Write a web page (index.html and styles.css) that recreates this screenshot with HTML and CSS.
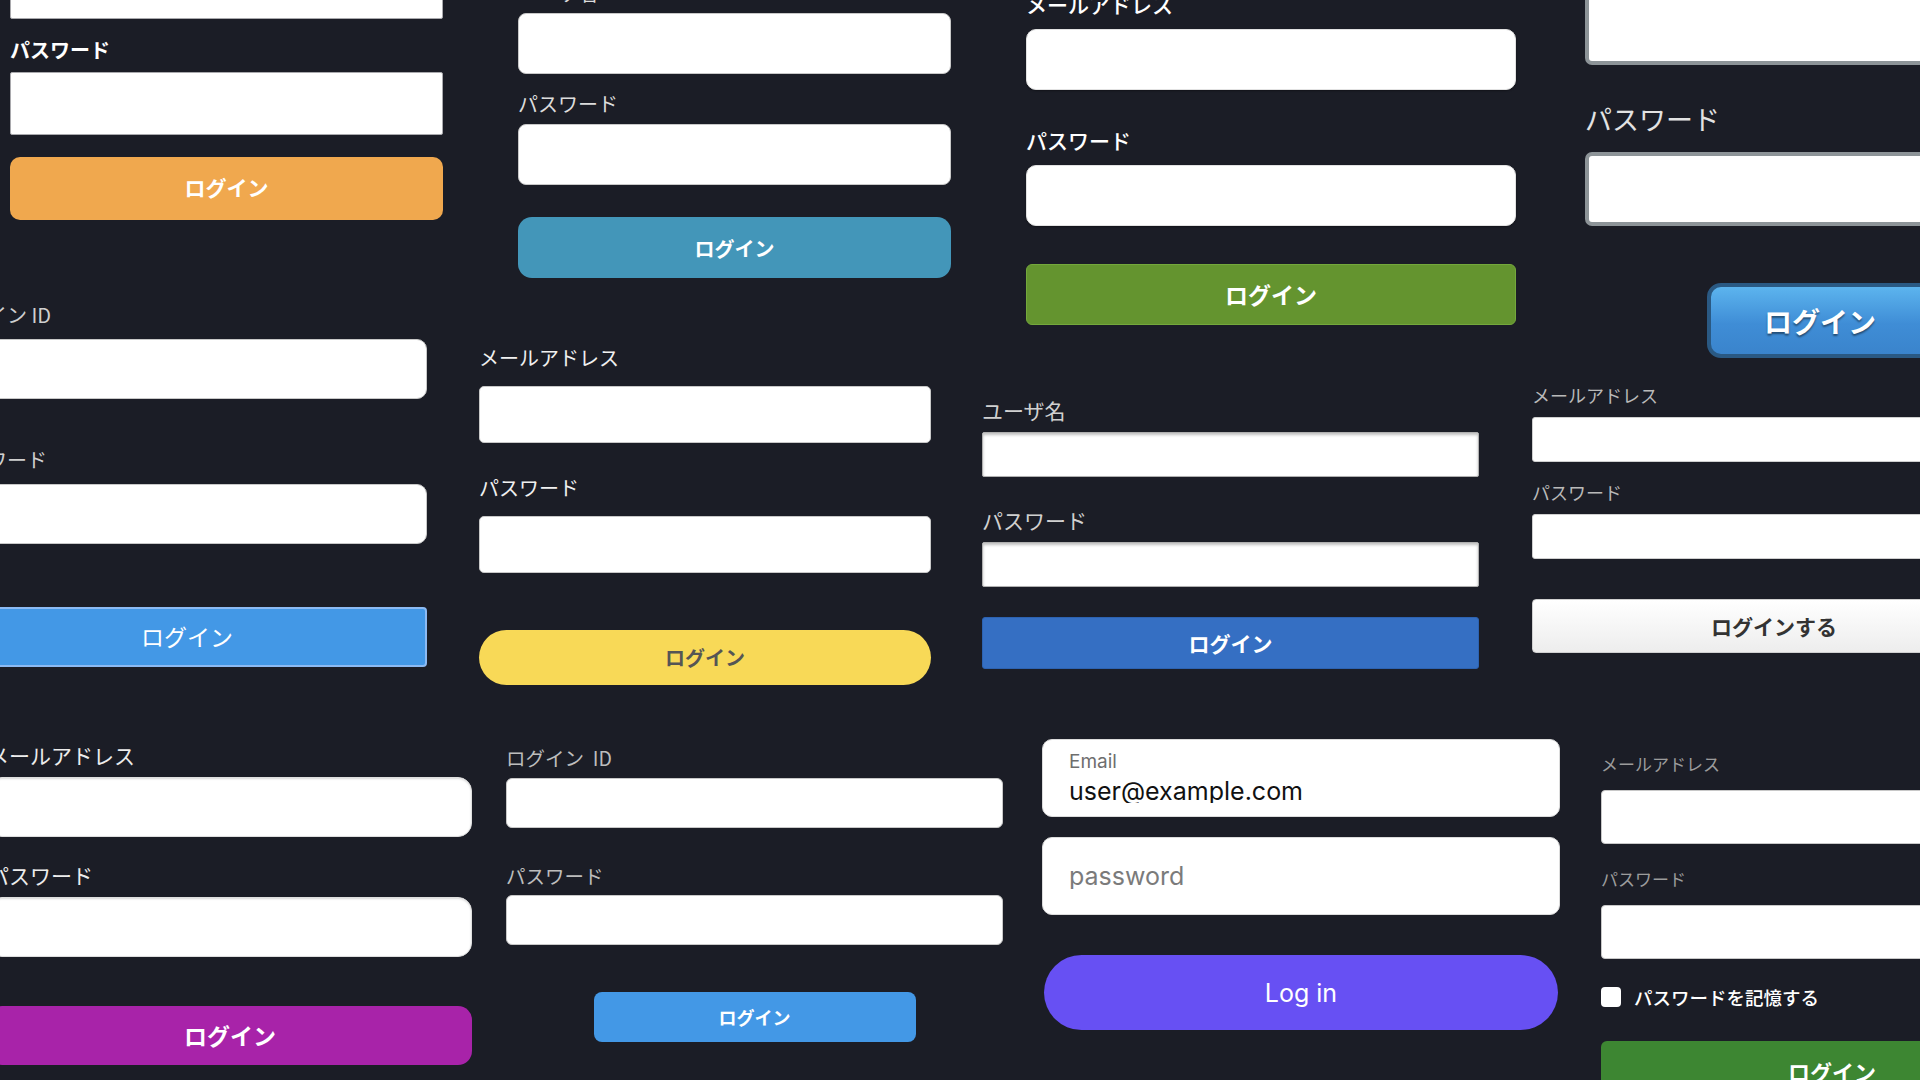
FILE: index.html
```html
<!DOCTYPE html>
<html lang="ja">
<head>
<meta charset="utf-8">
<title>ログインフォーム</title>
<link rel="stylesheet" href="styles.css">
</head>
<body>
<div class="canvas">

  <form class="form fa">
    <label class="lbl">メールアドレス</label>
    <input class="inp" type="text">
    <label class="lbl">パスワード</label>
    <input class="inp" type="password">
    <button class="btn" type="button">ログイン</button>
  </form>

  <form class="form fb">
    <label class="lbl">ユーザ名</label>
    <input class="inp" type="text">
    <label class="lbl">パスワード</label>
    <input class="inp" type="password">
    <button class="btn" type="button">ログイン</button>
  </form>

  <form class="form fc">
    <label class="lbl">メールアドレス</label>
    <input class="inp" type="text">
    <label class="lbl">パスワード</label>
    <input class="inp" type="password">
    <button class="btn" type="button">ログイン</button>
  </form>

  <form class="form fd">
    <label class="lbl">ユーザ名</label>
    <input class="inp" type="text">
    <label class="lbl">パスワード</label>
    <input class="inp" type="password">
    <button class="btn" type="button">ログイン</button>
  </form>

  <form class="form fe">
    <label class="lbl">ログイン ID</label>
    <input class="inp" type="text">
    <label class="lbl">パスワード</label>
    <input class="inp" type="password">
    <button class="btn" type="button">ログイン</button>
  </form>

  <form class="form ff">
    <label class="lbl">メールアドレス</label>
    <input class="inp" type="text">
    <label class="lbl">パスワード</label>
    <input class="inp" type="password">
    <button class="btn" type="button">ログイン</button>
  </form>

  <form class="form fg">
    <label class="lbl">ユーザ名</label>
    <input class="inp" type="text">
    <label class="lbl">パスワード</label>
    <input class="inp" type="password">
    <button class="btn" type="button">ログイン</button>
  </form>

  <form class="form fh">
    <label class="lbl">メールアドレス</label>
    <input class="inp" type="text">
    <label class="lbl">パスワード</label>
    <input class="inp" type="password">
    <button class="btn" type="button">ログインする</button>
  </form>

  <form class="form fi">
    <label class="lbl">メールアドレス</label>
    <input class="inp" type="text">
    <label class="lbl">パスワード</label>
    <input class="inp" type="password">
    <button class="btn" type="button">ログイン</button>
  </form>

  <form class="form fj">
    <label class="lbl">ログイン&nbsp;&nbsp;ID</label>
    <input class="inp" type="text">
    <label class="lbl">パスワード</label>
    <input class="inp" type="password">
    <button class="btn" type="button">ログイン</button>
  </form>

  <form class="form fk">
    <div class="field">
      <span class="flabel">Email</span>
      <input class="fval" type="text" value="user@example.com">
    </div>
    <div class="field pw">
      <input class="fval" type="password" placeholder="password">
    </div>
    <button class="btn" type="button">Log in</button>
  </form>

  <form class="form fl">
    <label class="lbl">メールアドレス</label>
    <input class="inp" type="text">
    <label class="lbl">パスワード</label>
    <input class="inp" type="password">
    <label class="remember"><input class="cb" type="checkbox"><span>パスワードを記憶する</span></label>
    <button class="btn" type="button">ログイン</button>
  </form>

</div>
</body>
</html>
```

FILE: styles.css
```css
html, body {
  margin: 0;
  padding: 0;
  background: #1b1d26;
  overflow: hidden;
}

.canvas {
  position: relative;
  width: 1920px;
  height: 1080px;
  overflow: hidden;
  background: #1b1d26;
  font-family: "Noto Sans CJK JP", "Noto Sans", sans-serif;
}

/* generic form */
.form {
  position: absolute;
  display: flex;
  flex-direction: column;
  margin: 0;
  box-sizing: border-box;
}

.form .lbl {
  display: block;
  font-size: var(--lfs);
  line-height: 1;
  color: var(--lc, #ddd);
  font-weight: var(--lw, 400);
  letter-spacing: var(--ls, 0);
  margin: 0 0 var(--gap) 0;
  white-space: nowrap;
}

.form .inp + .lbl {
  margin-top: var(--sep);
}

.form .inp {
  display: block;
  box-sizing: border-box;
  width: 100%;
  height: var(--ih);
  margin: 0;
  padding: 0 12px;
  background: #fff;
  border: 1px solid #c8c8c8;
  border-radius: var(--ir, 4px);
  font: inherit;
  outline: none;
}

.form .btn {
  display: flex;
  align-items: center;
  justify-content: center;
  box-sizing: border-box;
  width: 100%;
  margin: var(--bm) 0 0 0;
  padding: 0;
  border: none;
  font-family: inherit;
  color: #fff;
  font-weight: 700;
  cursor: pointer;
}

/* A : orange */
.fa {
  left: 10px; top: -76px; width: 433px;
  --lfs: 20px; --gap: 12px; --sep: 21px; --ih: 63px; --bm: 22px;
  --lc: #fff; --lw: 700; --ir: 2px;
}
.fa .inp { border-color: #a9a9ad; }
.fa .btn { height: 63px; border-radius: 10px; background: #f0a84e; font-size: 21px; padding-bottom: 3px; }

/* B : teal */
.fb {
  left: 518px; top: -17px; width: 433px;
  --lfs: 20px; --gap: 10px; --sep: 20px; --ih: 61px; --bm: 32px;
  --lc: #dcdcdc; --ir: 8px;
}
.fb .btn { height: 61px; border-radius: 14px; background: #4396b9; font-size: 20px; padding-top: 1px; }

/* C : green */
.fc {
  left: 1026px; top: -6px; width: 490px;
  --lfs: 21px; --gap: 14px; --sep: 40px; --ih: 61px; --bm: 38px;
  --lc: #fff; --lw: 500; --ir: 10px;
}
.fc .inp { border-color: #e2e2e2; box-shadow: 0 1px 2px rgba(0,0,0,0.35); }
.fc .btn { height: 61px; border-radius: 6px; background: #64942f; border: 1px solid #74a83c; font-size: 23px; padding-bottom: 2px; }

/* D : glossy blue */
.fd {
  left: 1585px; top: -56px; width: 470px;
  --lfs: 27px; --gap: 20px; --sep: 40px; --ih: 74px; --bm: 57px;
  --lc: #e2e2e2; --ir: 7px;
}
.fd .inp { border: 4px solid #8d9498; }
.fd .btn {
  align-self: center;
  width: 226px; height: 75px;
  border: 4px solid #2a5983;
  border-radius: 14px;
  background: linear-gradient(#5cb4ee, #3f8dd6 55%, #3a84cc);
  font-size: 28px;
  text-shadow: 0 2px 2px rgba(0,0,0,0.45);
}

/* E : light blue */
.fe {
  left: -53px; top: 305px; width: 480px;
  --lfs: 20px; --gap: 14px; --sep: 51px; --ih: 60px; --bm: 63px;
  --lc: #cfcfcf; --ir: 10px;
}
.fe .btn {
  height: 60px; border-radius: 4px; background: #4398e6;
  border: 2px solid #8cbaf3; font-size: 23px; font-weight: 400; padding-bottom: 2px;
}

/* F : yellow pill */
.ff {
  left: 479px; top: 348px; width: 452px;
  --lfs: 20px; --gap: 18px; --sep: 35px; --ih: 57px; --bm: 57px;
  --lc: #f0f0f0; --ir: 5px;
}
.ff .btn { height: 55px; border-radius: 28px; background: #f8d957; color: #555; font-size: 20px; }

/* G : classic blue */
.fg {
  left: 982px; top: 400px; width: 497px;
  --lfs: 21px; --gap: 11px; --sep: 33px; --ih: 45px; --bm: 30px;
  --lc: #d0d0d0; --ir: 2px;
}
.fg .inp { border-color: #b0b0b0; box-shadow: inset 0 2px 3px rgba(0,0,0,0.25); }
.fg .btn { height: 52px; border-radius: 3px; background: #356fc3; border: 1px solid #2d62b0; font-size: 21px; }

/* H : white button */
.fh {
  left: 1532px; top: 386px; width: 484px;
  --lfs: 18px; --gap: 13px; --sep: 21px; --ih: 45px; --bm: 40px;
  --lc: #b9b9b9; --ir: 3px;
}
.fh .inp { border-color: #cfcfcf; }
.fh .btn {
  height: 54px; border-radius: 4px;
  background: linear-gradient(#ffffff, #ededed);
  border: 1px solid #d0d0d0;
  color: #333; font-size: 21px;
}

/* I : purple */
.fi {
  left: -12px; top: 745px; width: 484px;
  --lfs: 21px; --gap: 11px; --sep: 28px; --ih: 60px; --bm: 49px;
  --lc: #ececec; --ir: 14px;
}
.fi .inp { border-color: #dedede; box-shadow: inset 0 1px 2px rgba(0,0,0,0.15); }
.fi .btn { height: 59px; border-radius: 14px; background: #a823a9; font-size: 23px; padding-bottom: 2px; }

/* J : small blue */
.fj {
  left: 506px; top: 748px; width: 497px;
  --lfs: 19.5px; --gap: 10px; --sep: 38px; --ih: 50px; --bm: 47px;
  --lc: #bdbdbd; --ir: 6px;
}
.fj .btn { align-self: center; width: 322px; height: 50px; border-radius: 8px; background: #4398e6; font-size: 18px; }

/* K : floating label, violet */
.fk {
  left: 1042px; top: 739px; width: 518px;
  font-family: Inter, "Noto Sans", sans-serif;
}
.fk .field {
  display: flex;
  flex-direction: column;
  box-sizing: border-box;
  height: 78px;
  padding: 12px 26px 0;
  background: #fff;
  border: 1px solid #dcdcdc;
  border-radius: 10px;
}
.fk .field.pw {
  margin-top: 20px;
  padding-top: 0;
  justify-content: center;
}
.fk .flabel {
  font-size: 19px;
  line-height: 19px;
  color: #6e6e6e;
}
.fk .fval {
  margin: 7px 0 0;
  padding: 0;
  border: none;
  outline: none;
  background: transparent;
  font-family: Inter, sans-serif;
  font-size: 25px;
  line-height: 25px;
  height: 25px;
  color: #111;
}
.fk .pw .fval { margin: 0; }
.fk .pw .fval::placeholder { color: #7b7b7b; opacity: 1; }
.fk .btn {
  align-self: center;
  width: 514px;
  margin-top: 40px;
  height: 75px;
  border-radius: 38px;
  background: #6750f3;
  font-family: Inter, sans-serif;
  font-size: 25px;
  font-weight: 400;
}

/* L : remember me, green */
.fl {
  left: 1601px; top: 755px; width: 462px;
  --lfs: 17px; --gap: 18px; --sep: 26px; --ih: 54px; --bm: 34px;
  --lc: #9c9c9c; --ir: 4px;
}
.fl .remember {
  display: flex;
  align-items: center;
  gap: 13px;
  margin-top: 28px;
  height: 20px;
  color: #fff;
  font-size: 18.5px;
  font-weight: 500;
}
.fl .cb {
  appearance: none;
  -webkit-appearance: none;
  width: 20px;
  height: 20px;
  margin: 0;
  background: #fff;
  border-radius: 4px;
}
.fl .btn { height: 60px; border-radius: 6px; background: #3d8632; font-size: 22px; }
```
